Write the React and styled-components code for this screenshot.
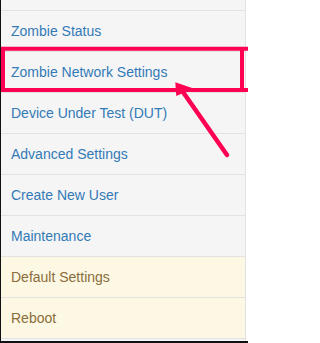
import React from "react";
import styled, { createGlobalStyle } from "styled-components";

const Global = createGlobalStyle`
  html, body { margin: 0; padding: 0; background: #ffffff; }
  body { font-family: "Liberation Sans", Arial, sans-serif; }
`;

const Frame = styled.div`
  position: relative;
  width: 248px;
  height: 343px;
  box-sizing: border-box;
  border-left: 1px solid #111;
  border-bottom: 2px solid #111;
  display: flex;
  background: #ffffff;
  overflow: hidden;
`;

const Sidebar = styled.nav`
  width: 245px;
  box-sizing: border-box;
  background: #f5f5f5;
  border-right: 1px solid #e2e2e2;
  padding-top: 10px;
`;

const List = styled.ul`
  list-style: none;
  margin: 0;
  padding: 0;
  border-bottom: 1px solid #e2e2e2;
`;

const Item = styled.li`
  border-top: 1px solid #e2e2e2;
  background: ${(p) => (p.$warning ? "#fcf8e3" : "#f5f5f5")};
`;

const Link = styled.a`
  display: block;
  padding: 10px 10px;
  font-size: 14px;
  line-height: 20px;
  color: ${(p) => (p.$warning ? "#8a6d3b" : "#337ab7")};
  text-decoration: none;
  white-space: nowrap;
`;

const Overlay = styled.svg`
  position: absolute;
  left: -1px;
  top: 0;
  width: 248px;
  height: 343px;
  pointer-events: none;
`;

const items = [
  { label: "Zombie Status" },
  { label: "Zombie Network Settings" },
  { label: "Device Under Test (DUT)" },
  { label: "Advanced Settings" },
  { label: "Create New User" },
  { label: "Maintenance" },
  { label: "Default Settings", warning: true },
  { label: "Reboot", warning: true },
];

export default function App() {
  const red = "#fe0152";
  return (
    <>
      <Global />
      <Frame>
        <Sidebar>
          <List>
            {items.map((it) => (
              <Item key={it.label} $warning={it.warning}>
                <Link href="#" $warning={it.warning}>
                  {it.label}
                </Link>
              </Item>
            ))}
          </List>
        </Sidebar>
        <Overlay viewBox="0 0 248 343">
          <line x1="3" y1="47" x2="3" y2="92" stroke={red} strokeWidth="4" />
          <line x1="1" y1="48.8" x2="248" y2="48.8" stroke={red} strokeWidth="4" />
          <line x1="1" y1="90" x2="248" y2="90" stroke={red} strokeWidth="4" />
          <line x1="242" y1="47" x2="242" y2="92" stroke={red} strokeWidth="4" />
          <line x1="183" y1="92" x2="227" y2="155" stroke={red} strokeWidth="4.5" strokeLinecap="round" />
          <polygon points="175.3,82.3 176.3,96 193.5,88.5" fill={red} />
        </Overlay>
      </Frame>
    </>
  );
}
